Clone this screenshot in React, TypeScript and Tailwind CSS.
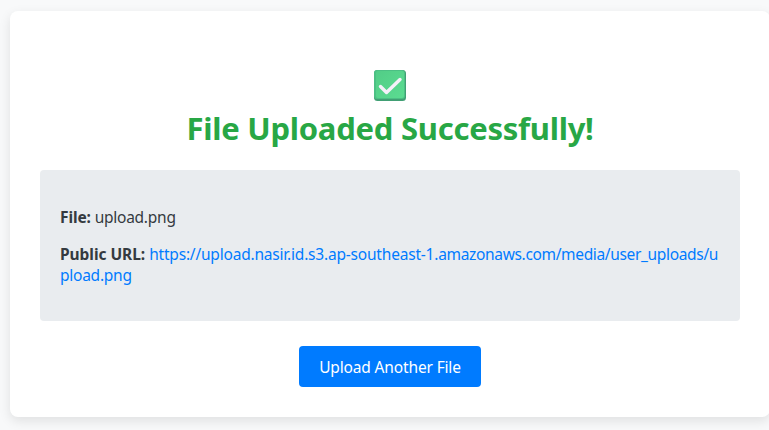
function CheckBadge() {
  return (
    <svg className="mx-auto block" width="32" height="31" viewBox="0 0 32 31" aria-hidden="true">
      <defs>
        <linearGradient id="face" x1="0" y1="0" x2="1" y2="1">
          <stop offset="0" stopColor="#52cd87" />
          <stop offset="1" stopColor="#5bdc91" />
        </linearGradient>
      </defs>
      <rect width="32" height="31" rx="3.5" fill="#419f74" />
      <rect x="0" y="0" width="31" height="29" rx="3" fill="#4cc084" />
      <rect x="2" y="1" width="28" height="27" rx="2" fill="url(#face)" />
      <path d="M6.5 16.5 L12.5 22.5 L26 9.5" fill="none" stroke="#f5f0fa" strokeWidth="3.4" strokeLinecap="round" strokeLinejoin="round" />
    </svg>
  );
}

export default function App() {
  return (
    <div className="h-[430px] w-[769px] overflow-hidden bg-[#f8f9fa] pl-[10px] pt-[11px] font-['Noto_Sans',sans-serif] text-[15.5px] leading-[21px] text-[#343a40]">
      <main className="h-[406px] w-[760px] rounded-lg bg-white px-[30px] pt-[59px] text-center shadow-[0_4px_12px_rgba(0,0,0,0.1)]">
        <CheckBadge />
        <h1 className="mt-[6px] h-[43px] whitespace-nowrap text-[31px] font-bold leading-[43px] tracking-[-0.25px] text-[#28a745]">
          File Uploaded Successfully!
        </h1>
        <section className="mt-[20px] h-[151px] rounded bg-[#e9ecef] px-5 pt-[37px] text-left">
          <p className="whitespace-nowrap tracking-[-0.25px]">
            <strong className="font-bold tracking-[-0.1px]">File:</strong> upload.png
          </p>
          <p className="mt-4 whitespace-nowrap">
            <strong className="font-bold tracking-[-0.05px]">Public URL:</strong>{" "}
            <a className="tracking-[-0.25px] text-[#007bff]">
              <span className="tracking-[-0.2px]">https://upload.nasir.id.s3.ap-southeast-1.</span>
              <span className="tracking-[-0.34px]">amazonaws.com/media/user_uploads/u</span>
              <br />
              pload.png
            </a>
          </p>
        </section>
        <button className="mt-[25px] h-[41px] w-[182px] whitespace-nowrap rounded bg-[#007bff] pt-px tracking-[-0.15px] text-white">
          Upload Another File
        </button>
      </main>
    </div>
  );
}
